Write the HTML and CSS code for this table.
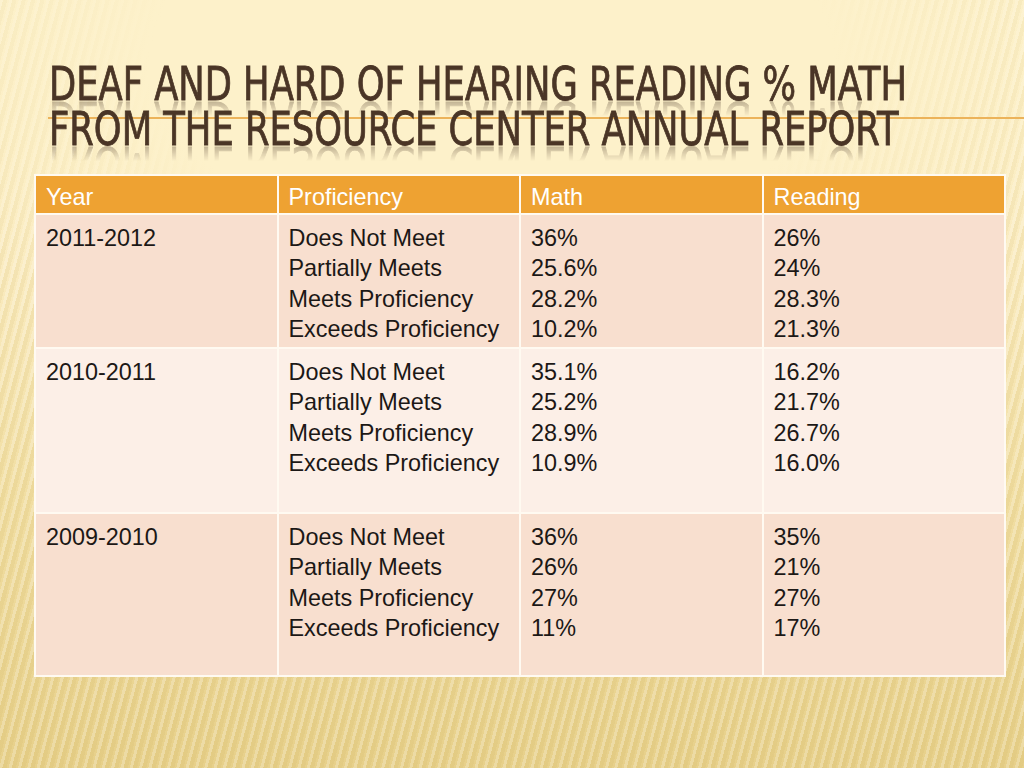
FILE: index.html
```html
<!DOCTYPE html>
<html lang="en">
<head>
<meta charset="utf-8">
<title>Deaf and Hard of Hearing Reading % Math</title>
<link rel="stylesheet" href="styles.css">
</head>
<body>
<div class="slide">
  <header class="title">
    <h1 class="title-line">DEAF AND HARD OF HEARING READING % MATH</h1>
    <h1 class="title-line">FROM THE RESOURCE CENTER ANNUAL REPORT</h1>
  </header>
  <table class="report">
    <colgroup><col><col><col><col></colgroup>
    <thead>
      <tr class="head-row">
        <th>Year</th><th>Proficiency</th><th>Math</th><th>Reading</th>
      </tr>
    </thead>
    <tbody>
      <tr class="row-a r1">
        <td>2011-2012</td>
        <td>Does Not Meet<br>Partially Meets<br>Meets Proficiency<br>Exceeds Proficiency</td>
        <td>36%<br>25.6%<br>28.2%<br>10.2%</td>
        <td>26%<br>24%<br>28.3%<br>21.3%</td>
      </tr>
      <tr class="row-b r2">
        <td>2010-2011</td>
        <td>Does Not Meet<br>Partially Meets<br>Meets Proficiency<br>Exceeds Proficiency</td>
        <td>35.1%<br>25.2%<br>28.9%<br>10.9%</td>
        <td>16.2%<br>21.7%<br>26.7%<br>16.0%</td>
      </tr>
      <tr class="row-a r3">
        <td>2009-2010</td>
        <td>Does Not Meet<br>Partially Meets<br>Meets Proficiency<br>Exceeds Proficiency</td>
        <td>36%<br>26%<br>27%<br>11%</td>
        <td>35%<br>21%<br>27%<br>17%</td>
      </tr>
    </tbody>
  </table>
</div>
</body>
</html>
```

FILE: styles.css
```css
html, body {
  margin: 0;
  padding: 0;
}

body {
  width: 1024px;
  height: 768px;
  overflow: hidden;
  background:
    radial-gradient(ellipse 620px 330px at 48% 8%, #fdf1ca 0%, #fdf1ca 55%, rgba(253, 241, 202, 0) 100%),
    repeating-linear-gradient(105deg, rgba(255, 255, 255, 0.22) 0 3px, rgba(190, 160, 70, 0.10) 3px 7px, rgba(255, 255, 255, 0) 7px 9px),
    linear-gradient(180deg, #fcf0c8 0%, #faebbf 35%, #f1dea2 65%, #e7d08a 100%);
}

.slide {
  width: 1024px;
  height: 768px;
  display: flex;
  flex-direction: column;
}

.title {
  padding: 61px 0 0 49px;
  height: 151px;
  box-sizing: border-box;
  background-image: linear-gradient(#ecb35a, #ecb35a);
  background-repeat: no-repeat;
  background-size: calc(100% - 48px) 2px;
  background-position: 48px 117px;
}

.title-line {
  margin: 0;
  font-family: "DejaVu Sans Condensed", "Liberation Sans", sans-serif;
  font-weight: normal;
  font-size: 47px;
  line-height: 45px;
  height: 45px;
  color: #4a3526;
  white-space: nowrap;
  transform: scaleX(0.835);
  transform-origin: 0 0;
  -webkit-text-stroke: 0.8px #4a3526;
  -webkit-box-reflect: below -10px linear-gradient(transparent 55%, rgba(0, 0, 0, 0.45));
}

.report {
  margin: 23px 0 0 34px;
  width: 972px;
  table-layout: fixed;
  border-collapse: collapse;
  font-family: "Liberation Sans", Arial, sans-serif;
  font-size: 23.4px;
  line-height: 30.4px;
  color: #1c1816;
}

.report th,
.report td {
  border: 2px solid #fffaf1;
  text-align: left;
  vertical-align: top;
  padding: 7px 10px 0 10px;
  font-weight: normal;
}

.head-row th {
  background: #eea232;
  color: #ffffff;
  height: 39px;
  box-sizing: border-box;
  padding-top: 6px;
}

.row-a td {
  background: #f8dfcf;
}

.row-b td {
  background: #fcefe7;
}

.r1 td { height: 134px; box-sizing: border-box; padding-top: 8px; }
.r2 td { height: 165px; box-sizing: border-box; padding-top: 8px; }
.r3 td { height: 163px; box-sizing: border-box; padding-top: 8px; }
```
